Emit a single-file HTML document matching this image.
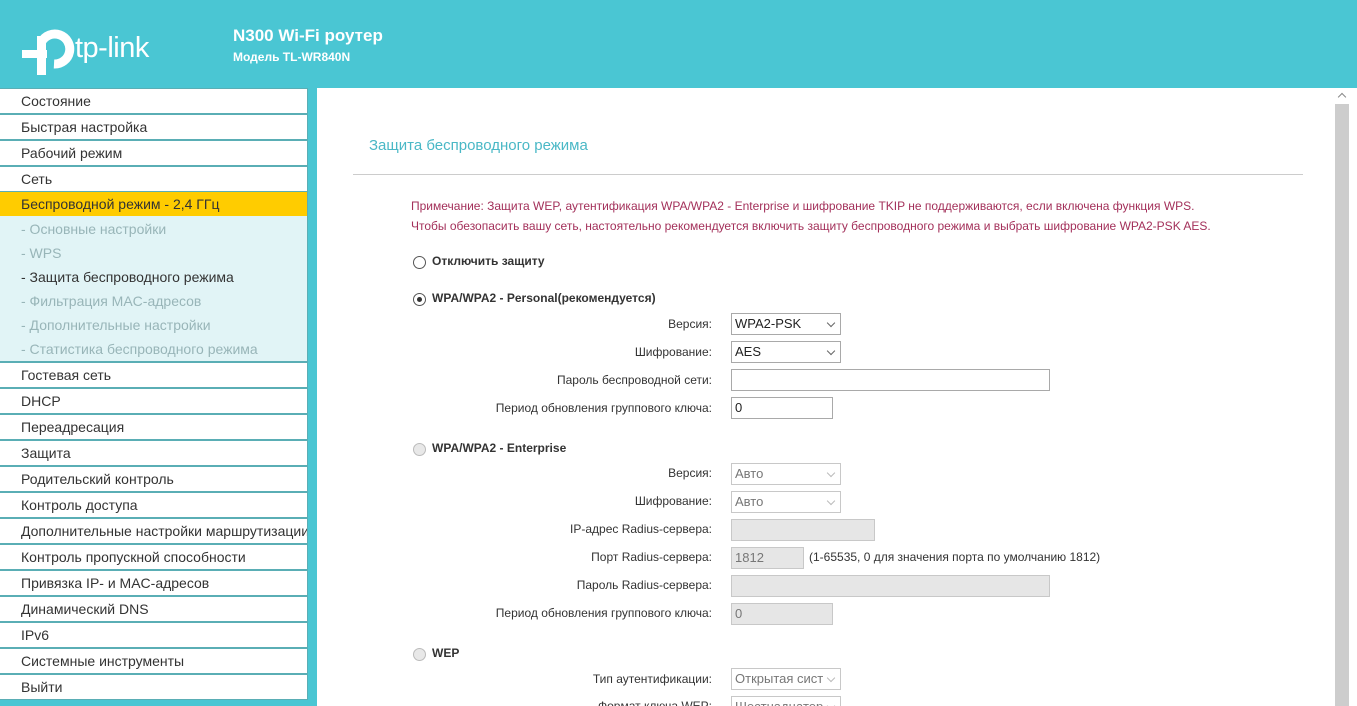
<!DOCTYPE html>
<html><head><meta charset="utf-8"><style>
*{margin:0;padding:0;box-sizing:border-box}
html{width:1357px;height:706px;overflow:hidden}
body{width:1357px;height:706px;overflow:hidden;background:#4ac6d3;font-family:"Liberation Sans",Arial,sans-serif;position:relative}
.hdr{position:absolute;left:0;top:0;width:1357px;height:88px;background:#4ac6d3}
.h1{position:absolute;left:233px;top:26px;color:#fff;font-weight:bold;font-size:17px}
.h2{position:absolute;left:233px;top:50px;color:#fff;font-weight:bold;font-size:12px}
.logo{position:absolute;left:20px;top:22px}
.lt{position:absolute;left:75px;top:32px;color:#fff;font-size:29px;letter-spacing:-0.5px}
.side{position:absolute;left:0;top:88px;width:308px;height:612px;background:#5aaeb5}
.it{position:absolute;left:0;width:307px;height:24px;background:#fff;font-size:14px;color:#333;padding-left:21px;line-height:24px;white-space:nowrap;overflow:hidden}
.sub{position:absolute;left:0;top:216px;width:307px;height:145px;background:#e1f4f6}
.si{position:absolute;left:21px;font-size:14px;color:#98b5b8;line-height:24px}
.main{position:absolute;left:317px;top:88px;width:1018px;height:618px;background:#fff;overflow:hidden}
.sb{position:absolute;left:1335px;top:88px;width:22px;height:618px;background:#fff}
.t{position:absolute;font-size:12px;color:#333;white-space:nowrap}
.lb{position:absolute;right:645px;font-size:12px;color:#333;white-space:nowrap}
.in{position:absolute;border:1px solid #a9a9a9;background:#fff;font-size:13px;color:#222;padding-left:3px;line-height:20px;height:22px}
.dis{background:#e6e6e6;color:#777;border-color:#c8c8c8}
.sel:after{content:"";position:absolute;right:6px;top:6px;width:5px;height:5px;border-right:1px solid #666;border-bottom:1px solid #666;transform:rotate(45deg)}
.dis.sel{background:#fff}
.dis.sel:after{border-color:#bbb}
.rd{position:absolute;left:413px;width:13px;height:13px;border-radius:50%;border:1px solid #555;background:#fff}
.rd.d{border-color:#bbb;background:#e8e8e8}
.b{font-weight:bold}
</style></head><body>
<div class="hdr"></div>
<svg class="logo" width="55" height="56" viewBox="0 0 55 56">
<rect x="2" y="28" width="25" height="8" fill="#fff"/>
<rect x="17" y="14" width="9" height="39" fill="#fff"/>
<path d="M21.5 20 A15 15 0 1 1 34 42" stroke="#fff" stroke-width="9" fill="none"/>
</svg>
<div class="lt">tp-link</div>
<div class="h1">N300 Wi-Fi роутер</div>
<div class="h2">Модель TL-WR840N</div>

<div class="side"></div>
<div class="it" style="top:89px">Состояние</div>
<div class="it" style="top:115px">Быстрая настройка</div>
<div class="it" style="top:141px">Рабочий режим</div>
<div class="it" style="top:167px">Сеть</div>
<div class="it" style="top:192px;background:#ffcc00;height:24px">Беспроводной режим - 2,4 ГГц</div>
<div class="sub">
<div class="si" style="top:1px">- Основные настройки</div>
<div class="si" style="top:25px">- WPS</div>
<div class="si" style="top:49px;color:#333">- Защита беспроводного режима</div>
<div class="si" style="top:73px">- Фильтрация MAC-адресов</div>
<div class="si" style="top:97px">- Дополнительные настройки</div>
<div class="si" style="top:121px">- Статистика беспроводного режима</div>
</div>
<div class="it" style="top:363px">Гостевая сеть</div>
<div class="it" style="top:389px">DHCP</div>
<div class="it" style="top:415px">Переадресация</div>
<div class="it" style="top:441px">Защита</div>
<div class="it" style="top:467px">Родительский контроль</div>
<div class="it" style="top:493px">Контроль доступа</div>
<div class="it" style="top:519px">Дополнительные настройки маршрутизации</div>
<div class="it" style="top:545px">Контроль пропускной способности</div>
<div class="it" style="top:571px">Привязка IP- и MAC-адресов</div>
<div class="it" style="top:597px">Динамический DNS</div>
<div class="it" style="top:623px">IPv6</div>
<div class="it" style="top:649px">Системные инструменты</div>
<div class="it" style="top:675px">Выйти</div>

<div class="main">
<div style="position:absolute;left:0;top:0;width:1018px;height:618px">
<div class="t" style="left:52px;top:49px;font-size:15px;color:#4ab8c6">Защита беспроводного режима</div>
<div style="position:absolute;left:36px;top:86px;width:950px;height:1px;background:#ccc"></div>
<div class="t" style="left:94px;top:111px;color:#a3305a">Примечание: Защита WEP, аутентификация WPA/WPA2 - Enterprise и шифрование TKIP не поддерживаются, если включена функция WPS.</div>
<div class="t" style="left:94px;top:131px;color:#a3305a">Чтобы обезопасить вашу сеть, настоятельно рекомендуется включить защиту беспроводного режима и выбрать шифрование WPA2-PSK AES.</div>
</div>
</div>
<div class="sb"><div style="position:absolute;left:0;top:16px;width:14px;height:602px;background:#cdcdcd"></div><div style="position:absolute;left:4px;top:6px;width:6px;height:6px;border-left:1px solid #888;border-top:1px solid #888;transform:rotate(45deg)"></div></div>

<div class="rd" style="top:256px"></div><div class="t b" style="left:432px;top:254px">Отключить защиту</div>
<div class="rd" style="top:293px"><div style="position:absolute;left:3px;top:3px;width:5px;height:5px;border-radius:50%;background:#333"></div></div><div class="t b" style="left:432px;top:291px">WPA/WPA2 - Personal(рекомендуется)</div>

<div class="lb" style="top:317px">Версия:</div><div class="in sel" style="left:731px;top:313px;width:110px">WPA2-PSK</div>
<div class="lb" style="top:345px">Шифрование:</div><div class="in sel" style="left:731px;top:341px;width:110px">AES</div>
<div class="lb" style="top:373px">Пароль беспроводной сети:</div><div class="in" style="left:731px;top:369px;width:319px"></div>
<div class="lb" style="top:401px">Период обновления группового ключа:</div><div class="in" style="left:731px;top:397px;width:102px">0</div>

<div class="rd d" style="top:443px"></div><div class="t b" style="left:432px;top:441px">WPA/WPA2 - Enterprise</div>
<div class="lb" style="top:466px">Версия:</div><div class="in dis sel" style="left:731px;top:463px;width:110px">Авто</div>
<div class="lb" style="top:494px">Шифрование:</div><div class="in dis sel" style="left:731px;top:491px;width:110px">Авто</div>
<div class="lb" style="top:522px">IP-адрес Radius-сервера:</div><div class="in dis" style="left:731px;top:519px;width:144px"></div>
<div class="lb" style="top:550px">Порт Radius-сервера:</div><div class="in dis" style="left:731px;top:547px;width:73px">1812</div>
<div class="t" style="left:809px;top:550px">(1-65535, 0 для значения порта по умолчанию 1812)</div>
<div class="lb" style="top:578px">Пароль Radius-сервера:</div><div class="in dis" style="left:731px;top:575px;width:319px"></div>
<div class="lb" style="top:606px">Период обновления группового ключа:</div><div class="in dis" style="left:731px;top:603px;width:102px">0</div>

<div class="rd d" style="top:648px"></div><div class="t b" style="left:432px;top:646px">WEP</div>
<div class="lb" style="top:672px">Тип аутентификации:</div><div class="in dis sel" style="left:731px;top:668px;width:110px;overflow:hidden;white-space:nowrap">Открытая сист</div>
<div class="lb" style="top:699px">Формат ключа WEP:</div><div class="in dis sel" style="left:731px;top:696px;width:110px;height:10px;overflow:hidden;white-space:nowrap;border-bottom:none">Шестнадцатер</div>
</body></html>
